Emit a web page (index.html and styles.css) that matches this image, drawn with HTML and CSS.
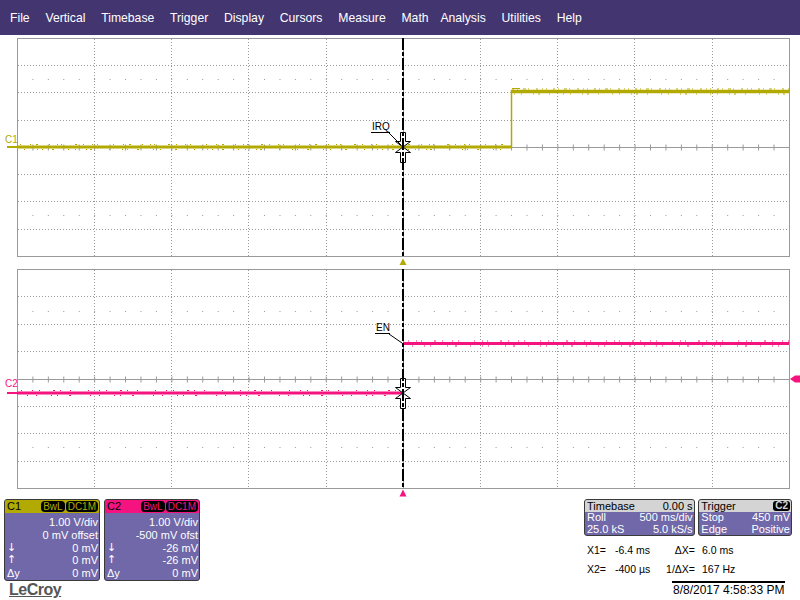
FILE: index.html
```html
<!DOCTYPE html>
<html>
<head>
<meta charset="utf-8">
<title>LeCroy</title>
<link rel="stylesheet" href="styles.css">
</head>
<body>
<div class="scope">
  <nav class="menubar">
    <span>File</span><span>Vertical</span><span>Timebase</span><span>Trigger</span><span>Display</span><span>Cursors</span><span>Measure</span><span>Math</span><span class="m-analysis">Analysis</span><span>Utilities</span><span>Help</span>
  </nav>

  <svg class="display" width="800" height="463" viewBox="0 35 800 463" xmlns="http://www.w3.org/2000/svg">
    <!-- ===== top grid ===== -->
    <g class="grid">
      <path class="dot" d="M94.5 39V256 M171.5 39V256 M248.5 39V256 M326.5 39V256 M480.5 39V256 M557.5 39V256 M634.5 39V256 M712.5 39V256"/>
      <path class="dot" d="M18 65.5H789 M18 92.5H789 M18 120.5H789 M18 174.5H789 M18 201.5H789 M18 229.5H789"/>
      <path class="sparse" d="M32.4 79.5H789 M32.4 215.5H789"/>
      <path class="axis" d="M18 147.5H789 M403.5 39V256"/>
      <path class="ticksh" d="M32.4 147.5H789"/>
      <rect class="frame" x="17.5" y="38.5" width="772" height="218"/>
    </g>
    <!-- ===== bottom grid ===== -->
    <g class="grid">
      <path class="dot" d="M94.5 270V488 M171.5 270V488 M248.5 270V488 M326.5 270V488 M480.5 270V488 M557.5 270V488 M634.5 270V488 M712.5 270V488"/>
      <path class="dot" d="M18 296.5H789 M18 324.5H789 M18 351.5H789 M18 406.5H789 M18 433.5H789 M18 461.5H789"/>
      <path class="sparse" d="M32.4 311.5H789 M32.4 447.5H789"/>
      <path class="axis" d="M18 379.5H789 M403.5 270V488"/>
      <path class="ticksh" d="M32.4 379.5H789"/>
      <rect class="frame" x="17.5" y="269.5" width="772" height="219"/>
    </g>

    <!-- ===== C1 trace ===== -->
    <text class="tag c1t" x="5" y="143">C1</text>
    <path class="c1s" stroke-width="2" d="M7 147H17"/>
    <path class="c1s" stroke-width="3" d="M17 147H511.5"/>
    <path class="c1s" stroke-width="1.5" d="M511.5 147V90"/>
    <path class="c1s" stroke-width="3.5" d="M511 91.5H789"/>
    <path class="c1s" stroke-width="1" stroke-dasharray="1 9 1 5 2 11 1 7 1 3 1 13 2 6 1 8 1 4 1 15" d="M20 144.5H511"/>
    <path class="c1s" stroke-width="1" stroke-dasharray="1 12 1 4 1 9 2 14 1 6 1 10 1 3 2 17" d="M24 149.5H511"/>
    <path class="c1s" stroke-width="1" stroke-dasharray="2 3 1 5 3 2 1 7 2 4 1 3 1 6" d="M512 89H789"/>
    <path class="c1s" stroke-width="1" stroke-dasharray="1 6 1 11 1 4 2 9 1 13" d="M514 94H789"/>
    <path class="c1s" stroke-width="1" d="M512 88.5H520"/>

    <!-- ===== C2 trace ===== -->
    <text class="tag c2t" x="5" y="387">C2</text>
    <path class="c2s" stroke-width="2" d="M7 393H17"/>
    <path class="c2s" stroke-width="3" d="M17 393H403"/>
    <path class="c2s" stroke-width="1" d="M403.5 393V343"/>
    <path class="c2s" stroke-width="3" d="M403 343.5H789"/>
    <path class="c2s" stroke-width="1" stroke-dasharray="1 10 1 6 1 13 2 5 1 9 1 17" d="M21 390.5H400"/>
    <path class="c2s" stroke-width="1" stroke-dasharray="1 8 1 14 1 5 1 11 2 19" d="M27 395.5H400"/>
    <path class="c2s" stroke-width="1" stroke-dasharray="1 7 1 4 1 12 2 6 1 9 1 5 1 15" d="M408 341H789"/>
    <path class="c2s" stroke-width="1" stroke-dasharray="1 11 1 5 1 16 1 7 2 13" d="M412 346H789"/>
    <polygon class="c2f" points="790,379 795,375.5 800,375.5 800,382.5 795,382.5"/>

    <!-- ===== cursor shapes ===== -->
    <path class="xhair" d="M400.5 132.5H405.5V141.5H410.5L403 147L395.5 141.5H400.5Z M403 147L410.5 152.5H405.5V162.5H400.5V152.5H395.5Z"/>
    <path class="xhair" d="M400.5 378.5H405.5V387.5H410.5L403 393L395.5 387.5H400.5Z M403 393L410.5 398.5H405.5V408.5H400.5V398.5H395.5Z"/>

    <!-- ===== cursor line ===== -->
    <path class="cursor" d="M403 38V256 M403 269V488"/>

    <!-- ===== labels ===== -->
    <text class="tag" x="372" y="129.5">IRQ</text>
    <path class="leader" d="M371 132.5H390 M389 133L401 145"/>
    <text class="tag" x="376" y="330.5">EN</text>
    <path class="leader" d="M375 333.5H390 M389 334L402 343"/>

    <!-- ===== trigger markers ===== -->
    <polygon class="c1f" points="403,258.5 399.5,265 406.5,265"/>
    <polygon class="c2f" points="403,489.5 399.5,496.5 406.5,496.5"/>
  </svg>

  <div class="footer">
    <div class="left">
      <div class="channels">
        <div class="chbox c1">
          <div class="chhead"><span class="chname">C1</span><span class="badge">BwL</span><span class="badge">DC1M</span></div>
          <div class="chbody">
            <div class="row"><span class="val">1.00 V/div</span></div>
            <div class="row"><span class="val">0 mV offset</span></div>
            <div class="row"><span class="arrow">↓</span><span class="val">0 mV</span></div>
            <div class="row"><span class="arrow">↑</span><span class="val">0 mV</span></div>
            <div class="row"><span>Δy</span><span class="val">0 mV</span></div>
          </div>
        </div>
        <div class="chbox c2">
          <div class="chhead"><span class="chname">C2</span><span class="badge">BwL</span><span class="badge">DC1M</span></div>
          <div class="chbody">
            <div class="row"><span class="val">1.00 V/div</span></div>
            <div class="row"><span class="val">-500 mV ofst</span></div>
            <div class="row"><span class="arrow">↓</span><span class="val">-26 mV</span></div>
            <div class="row"><span class="arrow">↑</span><span class="val">-26 mV</span></div>
            <div class="row"><span>Δy</span><span class="val">0 mV</span></div>
          </div>
        </div>
      </div>
      <div class="logo">LeCroy</div>
    </div>

    <div class="right">
      <div class="tbtrig">
        <div class="infobox tb">
          <div class="infohead"><span>Timebase</span><span>0.00 s</span></div>
          <div class="inforow"><span>Roll</span><span>500 ms/div</span></div>
          <div class="inforow"><span>25.0 kS</span><span>5.0 kS/s</span></div>
        </div>
        <div class="infobox trig">
          <div class="infohead"><span>Trigger</span><span class="tbadge">C2</span></div>
          <div class="inforow"><span>Stop</span><span>450 mV</span></div>
          <div class="inforow"><span>Edge</span><span>Positive</span></div>
        </div>
      </div>
      <div class="cursors">
        <span>X1=</span><span>-6.4 ms</span><span class="lbl2">ΔX=</span><span class="val2">6.0 ms</span>
        <span>X2=</span><span>-400 µs</span><span class="lbl2">1/ΔX=</span><span class="val2">167 Hz</span>
      </div>
      <div class="date">8/8/2017 4:58:33 PM</div>
    </div>
  </div>
</div>
</body>
</html>
```

FILE: styles.css
```css
html, body {
  margin: 0;
  padding: 0;
}
body {
  width: 800px;
  height: 600px;
  background: #ffffff;
  font-family: "Liberation Sans", Arial, sans-serif;
  overflow: hidden;
}
.scope {
  width: 800px;
  height: 600px;
  display: flex;
  flex-direction: column;
}

/* ---------- menu ---------- */
.menubar {
  height: 35px;
  flex: 0 0 35px;
  background: #433570;
  display: flex;
  align-items: center;
  padding-left: 10px;
  gap: 15.8px;
  color: #ffffff;
  font-size: 12.2px;
  line-height: 14px;
}
.menubar .m-analysis {
  margin-left: -4px;
}

/* ---------- display ---------- */
.display {
  display: block;
  flex: 0 0 463px;
}
.grid .dot {
  fill: none;
  stroke: #9a9a9a;
  stroke-width: 1;
  stroke-dasharray: 1 2;
}
.grid .sparse {
  fill: none;
  stroke: #9a9a9a;
  stroke-width: 1;
  stroke-dasharray: 1 14.44;
}
.grid .axis {
  fill: none;
  stroke: #9a9a9a;
  stroke-width: 1;
}
.grid .ticksh {
  fill: none;
  stroke: #9a9a9a;
  stroke-width: 6;
  stroke-dasharray: 1 14.44;
}
.grid .frame {
  fill: none;
  stroke: #9a9a9a;
  stroke-width: 1;
}
.c1s {
  fill: none;
  stroke: #b2aa00;
}
.c2s {
  fill: none;
  stroke: #f5137f;
}
.c1f { fill: #b2aa00; }
.c2f { fill: #f5137f; }
.tag {
  font-family: "Liberation Sans", Arial, sans-serif;
  font-size: 10px;
  fill: #000000;
}
.c1t { fill: #b2aa00; }
.c2t { fill: #f5137f; }
.xhair {
  fill: #ffffff;
  stroke: #000000;
  stroke-width: 1;
}
.cursor {
  fill: none;
  stroke: #000000;
  stroke-width: 2;
  stroke-dasharray: 12 2 4 2;
}
.leader {
  fill: none;
  stroke: #000000;
  stroke-width: 1;
}

/* ---------- footer ---------- */
.footer {
  flex: 1 1 auto;
  display: flex;
  justify-content: space-between;
}
.left {
  padding: 1px 0 0 4px;
  display: flex;
  flex-direction: column;
}
.channels {
  display: flex;
  gap: 4px;
}
.chbox {
  width: 96px;
  height: 82px;
  box-sizing: border-box;
  border: 1px solid #3a3a3a;
  border-radius: 3px;
  background: #7068a8;
  overflow: hidden;
}
.chhead {
  height: 13px;
  display: flex;
  align-items: center;
  padding: 0 1px 0 2px;
  font-size: 11px;
}
.c1 .chhead { background: #b2aa00; }
.c2 .chhead { background: #f5137f; }
.chname {
  color: #000000;
  margin-right: auto;
  line-height: 13px;
}
.badge {
  background: #000000;
  border-radius: 4px;
  font-size: 10px;
  padding: 0 2px;
  height: 11px;
  line-height: 11px;
  margin-left: 1px;
}
.c1 .badge { color: #b2aa00; }
.c2 .badge { color: #f5137f; }
.chbody {
  padding: 3px 1px 0 2px;
  color: #ffffff;
  font-size: 11px;
}
.row {
  display: flex;
  height: 12.8px;
  line-height: 12.8px;
}
.row .arrow {
  font-family: "DejaVu Sans", sans-serif;
  font-size: 11px;
}
.row .val {
  margin-left: auto;
}
.logo {
  margin: 1px 0 0 5px;
  font-size: 16px;
  line-height: 16px;
  font-weight: bold;
  letter-spacing: -0.5px;
  color: #555555;
  text-decoration: underline;
}

.right {
  width: 208px;
  margin-right: 8px;
  padding-top: 1px;
  display: flex;
  flex-direction: column;
}
.tbtrig {
  display: flex;
  gap: 3.7px;
}
.infobox {
  height: 37px;
  box-sizing: border-box;
  border: 1px solid #3a3a3a;
  border-radius: 3px;
  background: #7068a8;
  overflow: hidden;
  font-size: 11px;
}
.tb { width: 111px; }
.trig { width: 94px; }
.infohead {
  background: #d4d4d4;
  color: #000000;
  height: 12px;
  line-height: 12px;
  display: flex;
  justify-content: space-between;
  align-items: center;
  padding: 0 1px 0 2px;
}
.tbadge {
  background: #000000;
  color: #d4d4d4;
  border-radius: 3px;
  font-size: 10px;
  line-height: 10px;
  height: 10px;
  padding: 0 2px;
  font-weight: bold;
}
.inforow {
  color: #ffffff;
  display: flex;
  justify-content: space-between;
  padding: 0 1px 0 2px;
  height: 11.5px;
  line-height: 11.5px;
}
.cursors {
  display: grid;
  grid-template-columns: 28px 39px 41px auto;
  margin: 5px 0 0 3px;
  font-size: 10.5px;
  line-height: 19px;
  color: #000000;
}
.cursors .lbl2 { text-align: right; }
.cursors .val2 { padding-left: 7px; }
.date {
  margin: 2px 0 0 88px;
  width: 112px;
  border-top: 2px solid #000000;
  font-size: 12px;
  line-height: 14px;
  padding-left: 1px;
  color: #000000;
}
```
